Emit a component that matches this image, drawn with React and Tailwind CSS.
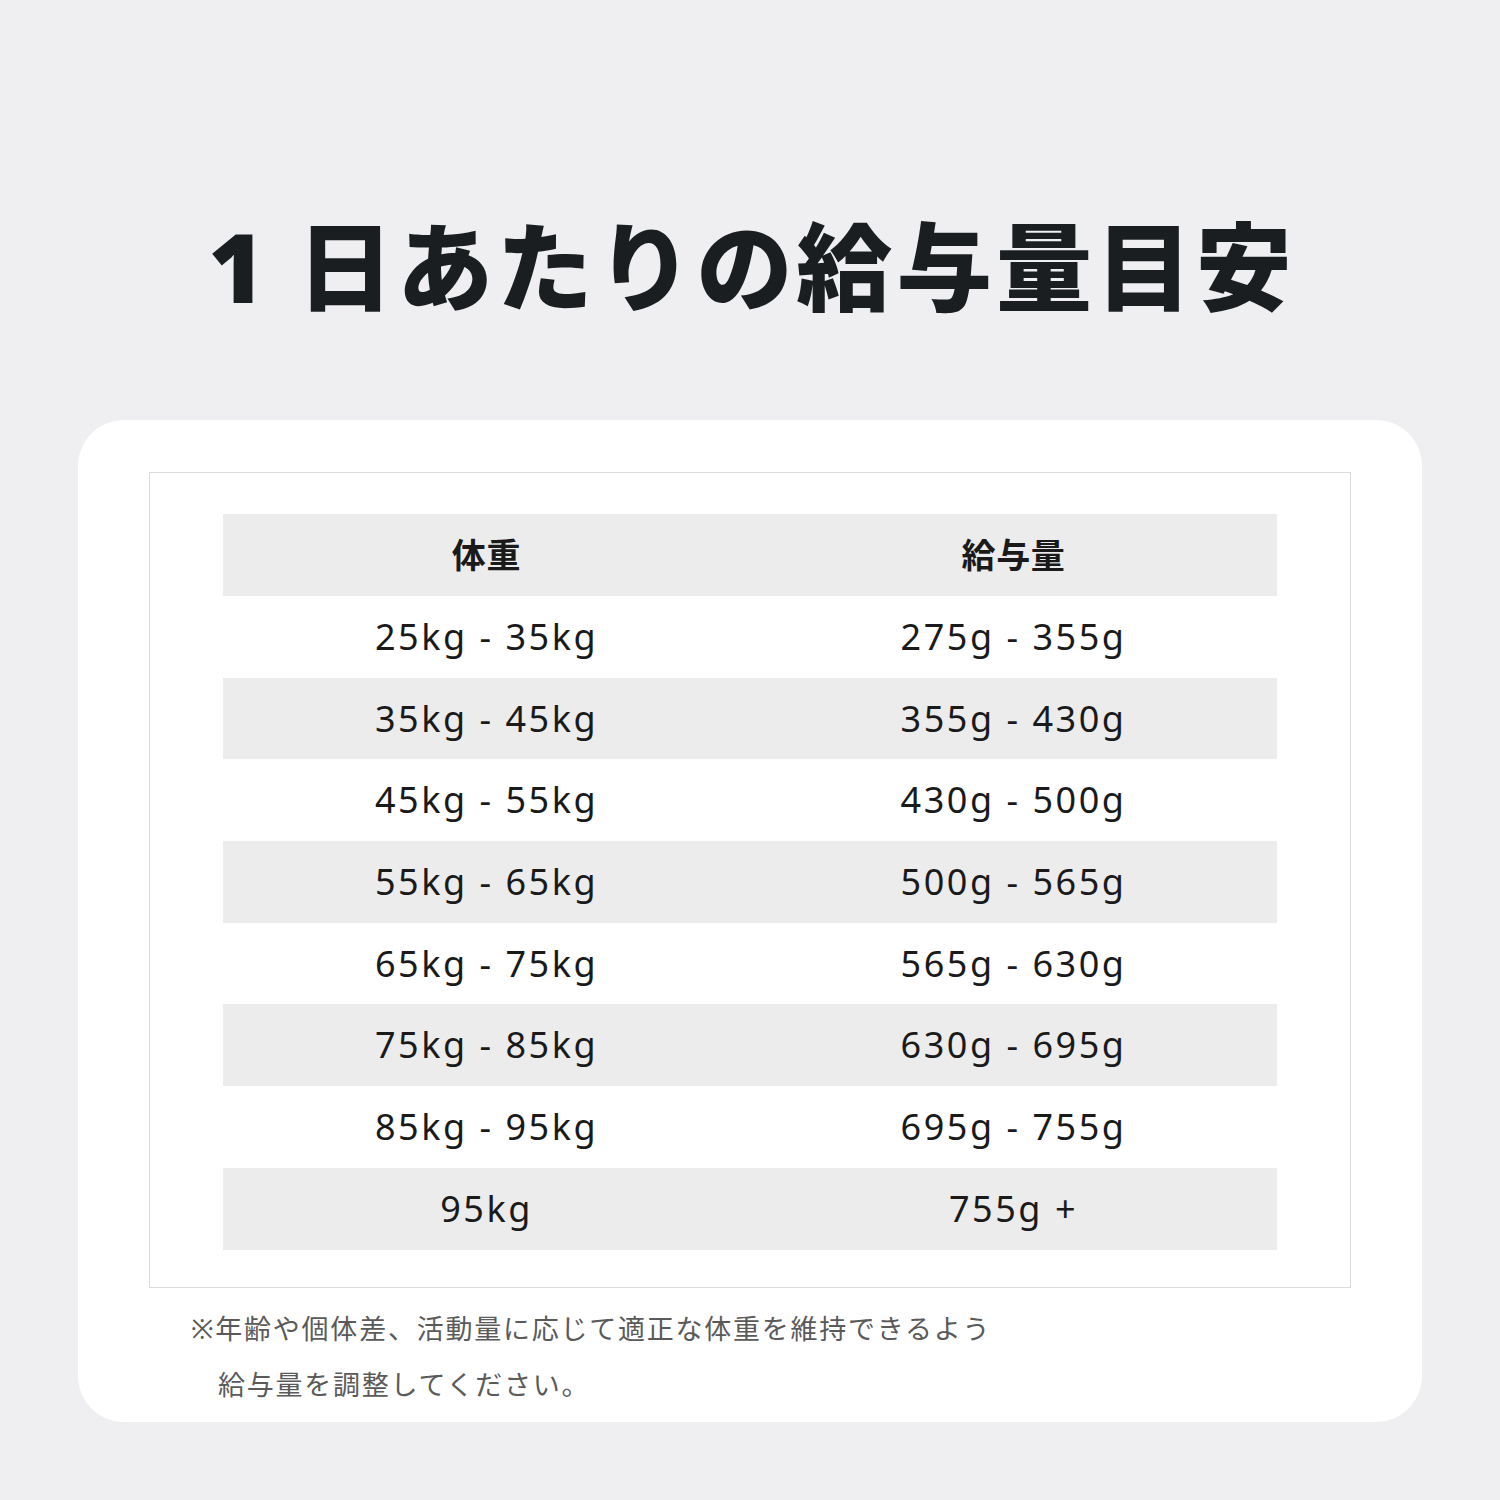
const rows = [
  ['25kg - 35kg', '275g - 355g'],
  ['35kg - 45kg', '355g - 430g'],
  ['45kg - 55kg', '430g - 500g'],
  ['55kg - 65kg', '500g - 565g'],
  ['65kg - 75kg', '565g - 630g'],
  ['75kg - 85kg', '630g - 695g'],
  ['85kg - 95kg', '695g - 755g'],
  ['95kg', '755g +'],
]

export default function App() {
  return (
    <div
      className="w-[1500px] h-[1500px] bg-[#efeff1] flex flex-col items-center"
      style={{ fontFamily: '"Noto Sans", "Noto Sans CJK JP", sans-serif' }}
    >
      {/* Title */}
      <h1 className="mt-[208px] h-[115px] text-[96px] leading-[115px] font-black text-[#1b1e21] tracking-[0.04em] pl-[0.04em]">
        1 日あたりの給与量目安
      </h1>

      {/* Card */}
      <div className="mt-[97px] w-[1344px] h-[1002px] bg-white rounded-[46px] px-[71px] pt-[52px]">
        <div className="border border-[#dcdcdc] px-[73px] pt-[41px] pb-[37px]">
          <table className="w-full border-collapse table-fixed">
            <thead>
              <tr className="bg-[#ececec] h-[82px]">
                <th className="text-[34px] font-bold text-[#1a1a1a] tracking-[0.02em]">体重</th>
                <th className="text-[34px] font-bold text-[#1a1a1a] tracking-[0.02em]">給与量</th>
              </tr>
            </thead>
            <tbody>
              {rows.map((r, i) => (
                <tr key={i} className={`h-[81.7px] ${i % 2 === 1 ? 'bg-[#ececec]' : 'bg-white'}`}>
                  <td className="text-center text-[36px] text-[#1a1a1a] tracking-[0.07em]">{r[0]}</td>
                  <td className="text-center text-[36px] text-[#1a1a1a] tracking-[0.07em]">{r[1]}</td>
                </tr>
              ))}
            </tbody>
          </table>
        </div>

        {/* Note */}
        <div className="mt-[13px] pl-[42px] text-[27px] leading-[56px] text-[#5a5a5a] tracking-[0.065em]">
          <p>※年齢や個体差、活動量に応じて適正な体重を維持できるよう</p>
          <p className="pl-[27px]">給与量を調整してください。</p>
        </div>
      </div>
    </div>
  )
}
